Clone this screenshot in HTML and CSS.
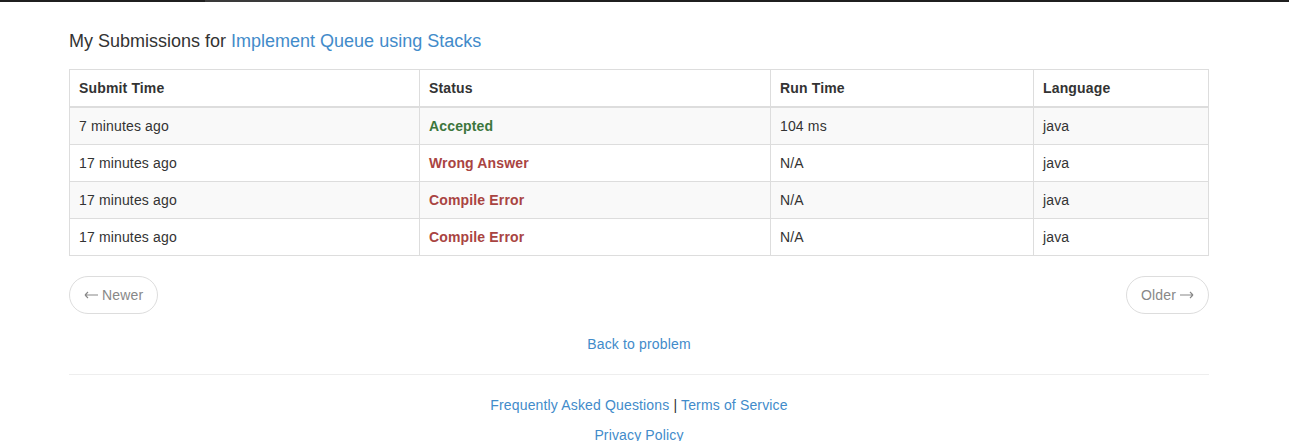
FILE: index.html
```html
<!DOCTYPE html>
<html>
<head>
<meta charset="utf-8">
<title>My Submissions</title>
<link rel="stylesheet" href="styles.css">
</head>
<body>
<div class="topbar"><div class="topbar-gap"></div><div class="topbar-active"></div></div>
<div class="container">
  <h4 class="title">My Submissions for <a href="#">Implement Queue using Stacks</a></h4>
  <table class="subs">
    <colgroup>
      <col class="c1"><col class="c2"><col class="c3"><col class="c4">
    </colgroup>
    <thead>
      <tr><th>Submit Time</th><th>Status</th><th>Run Time</th><th>Language</th></tr>
    </thead>
    <tbody>
      <tr><td>7 minutes ago</td><td><a class="st ok" href="#">Accepted</a></td><td>104 ms</td><td>java</td></tr>
      <tr><td>17 minutes ago</td><td><a class="st bad" href="#">Wrong Answer</a></td><td>N/A</td><td>java</td></tr>
      <tr><td>17 minutes ago</td><td><a class="st bad" href="#">Compile Error</a></td><td>N/A</td><td>java</td></tr>
      <tr><td>17 minutes ago</td><td><a class="st bad" href="#">Compile Error</a></td><td>N/A</td><td>java</td></tr>
    </tbody>
  </table>
  <div class="pager">
    <a class="pg" href="#"><svg class="arr" width="14" height="8" viewBox="0 0 14 8"><path d="M1 4H14M1 4L4 1M1 4L4 7" fill="none" stroke="#888" stroke-width="1.1"/></svg> Newer</a>
    <a class="pg" href="#">Older <svg class="arr" width="14" height="8" viewBox="0 0 14 8"><path d="M0 4H13M13 4L10 1M13 4L10 7" fill="none" stroke="#888" stroke-width="1.1"/></svg></a>
  </div>
  <p class="back"><a href="#">Back to problem</a></p>
  <hr class="sep">
  <div class="footer">
    <p><a href="#">Frequently Asked Questions</a> | <a href="#">Terms of Service</a></p>
    <p><a href="#">Privacy Policy</a></p>
  </div>
</div>
</body>
</html>
```
FILE: styles.css
```css
* { box-sizing: border-box; }
html, body { margin: 0; padding: 0; background: #fff; }
body {
  font-family: "Liberation Sans", Arial, Helvetica, sans-serif;
  font-size: 14px;
  line-height: 20px;
  color: #333;
  letter-spacing: 0.15px;
}
a { color: #428bca; text-decoration: none; }
.topbar { height: 2px; background: #1f1f1f; display: flex; }
.topbar-gap { width: 205px; }
.topbar-active { width: 235px; background: #3a3a3a; }
.container { width: 1140px; margin-left: 69px; padding-top: 29px; }
.title {
  font-size: 18px;
  font-weight: normal;
  line-height: 20px;
  margin: 0 0 18px 0;
  color: #333;
  letter-spacing: 0;
}
.subs {
  width: 1139px;
  table-layout: fixed;
  border-collapse: collapse;
  border: 1px solid #ddd;
  margin: 0;
}
.c1 { width: 350px; }
.c2 { width: 351px; }
.c3 { width: 263px; }
.c4 { width: 175px; }
.subs th, .subs td {
  border: 1px solid #ddd;
  padding: 8px 9px;
  text-align: left;
  vertical-align: top;
  line-height: 20px;
}
.subs th { font-weight: bold; border-bottom-width: 2px; }
.subs tbody tr:nth-child(odd) td { background: #f9f9f9; }
.st { font-weight: bold; }
.ok { color: #3c763d; }
.bad { color: #a94442; }
.pager {
  display: flex;
  justify-content: space-between;
  margin: 20px 0;
}
.pg {
  display: inline-block;
  height: 38px;
  padding: 8px 14px;
  border: 1px solid #ddd;
  border-radius: 19px;
  color: #888;
  background: #fff;
  line-height: 20px;
}
.arr { display: inline-block; vertical-align: 1px; }
.back { text-align: center; margin: 0; }
.sep { border: 0; border-top: 1px solid #eee; margin: 20px 0; height: 0; }
.footer { text-align: center; }
.footer p { margin: 0 0 10px 0; }
```
